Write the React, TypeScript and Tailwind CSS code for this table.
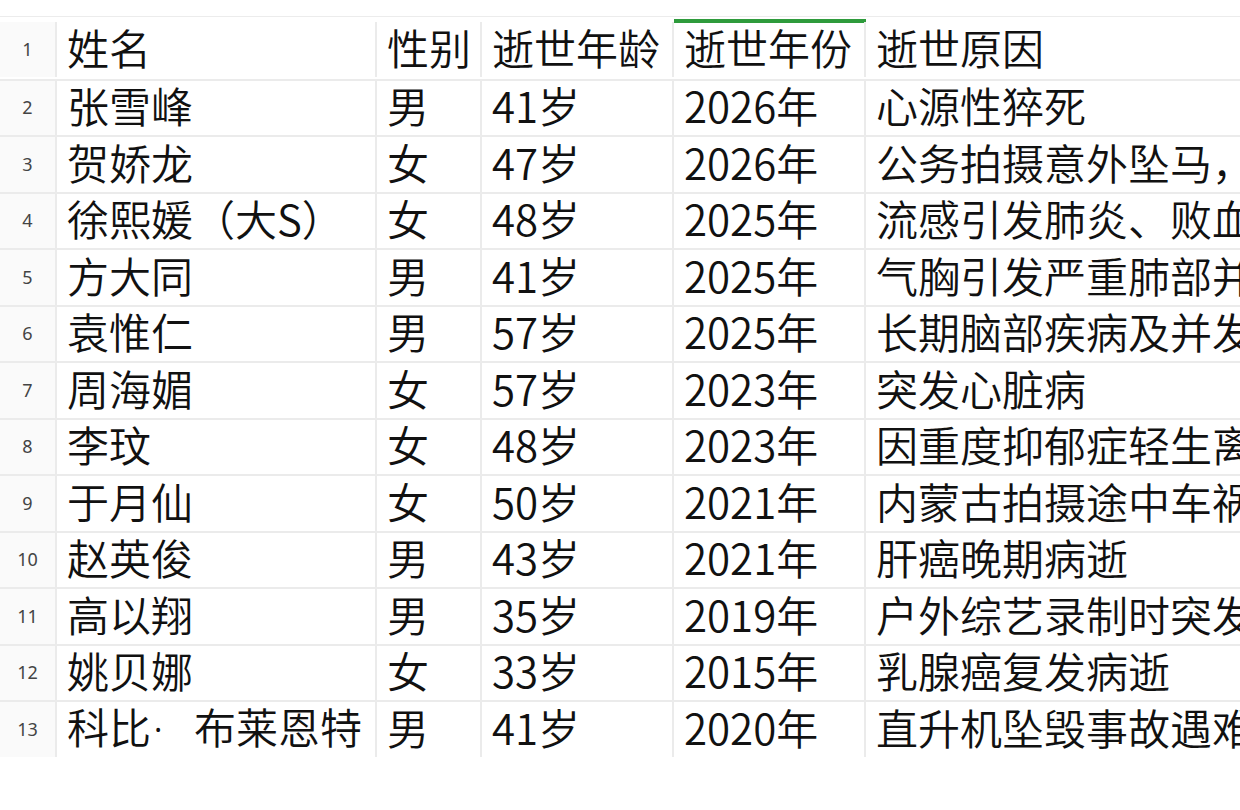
import React from "react";

const rows: [React.ReactNode, string, string, string, string][] = [
  ["姓名", "性别", "逝世年龄", "逝世年份", "逝世原因"],
  ["张雪峰", "男", "41岁", "2026年", "心源性猝死"],
  ["贺娇龙", "女", "47岁", "2026年", "公务拍摄意外坠马，抢救无效"],
  ["徐熙媛（大S）", "女", "48岁", "2025年", "流感引发肺炎、败血症"],
  ["方大同", "男", "41岁", "2025年", "气胸引发严重肺部并发症"],
  ["袁惟仁", "男", "57岁", "2025年", "长期脑部疾病及并发症"],
  ["周海媚", "女", "57岁", "2023年", "突发心脏病"],
  ["李玟", "女", "48岁", "2023年", "因重度抑郁症轻生离世"],
  ["于月仙", "女", "50岁", "2021年", "内蒙古拍摄途中车祸遇难"],
  ["赵英俊", "男", "43岁", "2021年", "肝癌晚期病逝"],
  ["高以翔", "男", "35岁", "2019年", "户外综艺录制时突发心源性猝死"],
  ["姚贝娜", "女", "33岁", "2015年", "乳腺癌复发病逝"],
  [
    <>
      科比
      <span className="inline-block w-[43px] font-['Noto_Sans',sans-serif] pl-[2px]">·</span>
      布莱恩特
    </>,
    "男",
    "41岁",
    "2020年",
    "直升机坠毁事故遇难",
  ],
];

const font = "font-['Noto_Sans_CJK_SC','Noto_Sans',sans-serif]";

export default function App() {
  return (
    <div className={`w-[1240px] h-[810px] bg-white overflow-hidden ${font}`}>
      <div className="h-[16px]" />
      <div className="h-px bg-[#ececec]" />
      <div className="h-[5px] grid grid-cols-[57px_320px_105px_192px_192px_1fr]">
        <div />
        <div />
        <div />
        <div />
        <div className="h-[4px] mt-[2px] bg-[#2e9b3c]" />
        <div />
      </div>
      <div>
        {rows.map((r, i) => (
          <div
            key={i}
            className="h-[56.5px] last:h-[52px] last:items-start grid grid-cols-[57px_320px_105px_192px_192px_1fr] border-t-[2px] border-[#ebebeb] first:border-t-0"
          >
            <div className="h-[54.5px] flex items-center justify-center bg-[#fafafa] border-r-[2px] border-[#ebebeb] text-[18px] text-[#444] font-['Noto_Sans',sans-serif]">
              {i + 1}
            </div>
            {r.map((c, j) => (
              <div
                key={j}
                className={`h-[54.5px] flex items-center whitespace-nowrap text-[42px] leading-[48px] font-[350] text-[#111] pl-[10px] pb-[5px] ${
                  j < 4 ? "border-r-[2px] border-[#ebebeb]" : "min-w-0"
                }`}
              >
                <span>{c}</span>
              </div>
            ))}
          </div>
        ))}
      </div>
    </div>
  );
}
